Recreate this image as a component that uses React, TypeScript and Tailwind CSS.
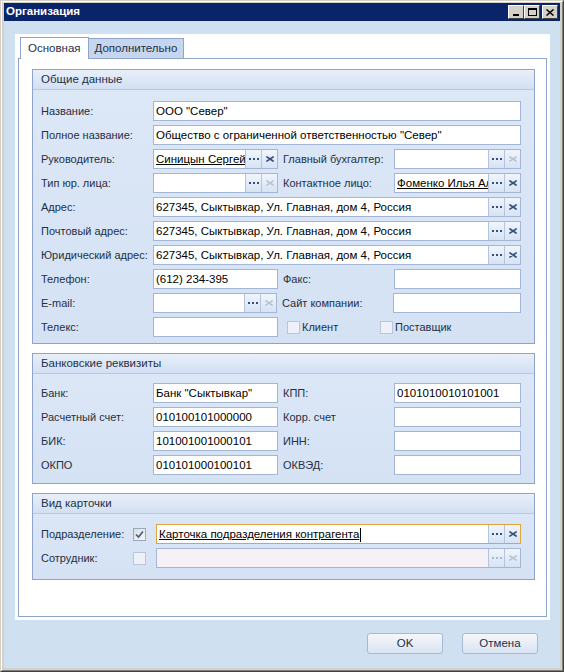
import clsx from 'clsx'

const LABEL = 'text-[11px] text-[#1f3047] whitespace-nowrap'

function Dots({ dim }: { dim?: boolean }) {
  return (
    <div className="w-[16px] h-full shrink-0 border-l border-[#b3c4df] bg-gradient-to-b from-[#f0f5fc] to-[#d7e3f4] flex items-center justify-center gap-[2px]">
      <span className={clsx('w-[2px] h-[2px]', dim ? 'bg-[#a9b8cf]' : 'bg-[#34507a]')} />
      <span className={clsx('w-[2px] h-[2px]', dim ? 'bg-[#a9b8cf]' : 'bg-[#34507a]')} />
      <span className={clsx('w-[2px] h-[2px]', dim ? 'bg-[#a9b8cf]' : 'bg-[#34507a]')} />
    </div>
  )
}

function Clear({ dim }: { dim?: boolean }) {
  return (
    <div className="w-[16px] h-full shrink-0 border-l border-[#b3c4df] bg-gradient-to-b from-[#f0f5fc] to-[#d7e3f4] flex items-center justify-center">
      <svg width="8" height="6" viewBox="0 0 8 6">
        <path d="M1 1 L7 5 M7 1 L1 5" stroke={dim ? '#b8c4d6' : '#34507a'} strokeWidth="1.6" strokeLinecap="square" />
      </svg>
    </div>
  )
}

type FieldProps = {
  w: string
  value?: string
  link?: boolean
  btn?: boolean
  dimX?: boolean
  focus?: boolean
  disabled?: boolean
}

function Field({ w, value, link, btn, dimX, focus, disabled }: FieldProps) {
  return (
    <div
      className={clsx(
        'flex h-[20px] shrink-0 border',
        w,
        focus ? 'border-[#dfa53a]' : 'border-[#a3b6d6]',
        disabled ? 'bg-[#f6f1f6]' : 'bg-white'
      )}
    >
      <div className="flex-1 min-w-0 overflow-hidden whitespace-nowrap pl-[2px] text-[11.5px] leading-[18px] text-black">
        {link ? <span className="underline">{value}</span> : value}
        {focus && <span className="inline-block w-px h-[14px] bg-black align-middle ml-px" />}
      </div>
      {btn && (
        <>
          <Dots dim={disabled} />
          <Clear dim={dimX || disabled} />
        </>
      )}
    </div>
  )
}

function Check({ checked, dim }: { checked?: boolean; dim?: boolean }) {
  return (
    <div
      className={clsx(
        'w-[13px] h-[13px] shrink-0 border flex items-center justify-center',
        dim ? 'border-[#b9c6da] bg-[#eef2f8]' : 'border-[#9aaac4] bg-gradient-to-br from-[#dcdcdc] to-[#f8f8f8]'
      )}
    >
      {checked && (
        <svg width="9" height="9" viewBox="0 0 9 9">
          <path d="M1 4.5 L3.5 7 L8 1.5" stroke="#3c5a8a" strokeWidth="1.6" fill="none" />
        </svg>
      )}
    </div>
  )
}

function Row({ children }: { children: React.ReactNode }) {
  return <div className="flex items-center h-[20px]">{children}</div>
}

function Group({ title, children, pt, pb }: { title: string; children: React.ReactNode; pt: string; pb: string }) {
  return (
    <div className="border border-[#8ea4cb] bg-gradient-to-b from-[#dde8f7] to-[#d4e2f4]">
      <div className="h-[20px] pl-[8px] flex items-center border-b border-[#b5c8e6] bg-gradient-to-b from-[#e8eff9] to-[#d2e0f4] text-[11.5px] text-[#1f3047]">
        {title}
      </div>
      <div className={clsx('flex flex-col gap-[4px] pl-[8px] pr-[11px]', pt, pb)}>{children}</div>
    </div>
  )
}

function TitleBtn({ children }: { children: React.ReactNode }) {
  return (
    <div className="w-[16px] h-[14px] bg-[#d4d0c8] border border-t-white border-l-white border-r-[#404040] border-b-[#404040] flex items-center justify-center">
      {children}
    </div>
  )
}

export default function App() {
  return (
    <div className="w-[564px] h-[672px] font-['Liberation_Sans',Arial,sans-serif] border border-t-[#d4d0c8] border-l-[#d4d0c8] border-r-[#404040] border-b-[#404040]">
      <div className="h-full border border-t-white border-l-white border-r-[#808080] border-b-[#808080] bg-[#d4d0c8] p-[2px] pt-[1px] flex flex-col">
        {/* title bar */}
        <div className="h-[18px] shrink-0 bg-[#0a246a] flex items-center pl-[2px] pr-[2px]">
          <span className="text-white font-bold text-[11.5px] flex-1">Организация</span>
          <div className="flex">
            <TitleBtn>
              <span className="w-[6px] h-[2px] bg-black mt-[6px] -ml-[1px]" />
            </TitleBtn>
            <TitleBtn>
              <span className="w-[9px] h-[8px] border border-black border-t-2" />
            </TitleBtn>
          </div>
          <div className="ml-[2px]">
            <TitleBtn>
              <svg width="8" height="7" viewBox="0 0 8 7">
                <path d="M0.5 0.5 L7.5 6.5 M7.5 0.5 L0.5 6.5" stroke="#000" strokeWidth="1.5" />
              </svg>
            </TitleBtn>
          </div>
        </div>

        {/* body */}
        <div className="flex-1 bg-[#cfe0f0] pt-[13px] pl-[11px] pr-[10px] pb-[12px] flex flex-col">
          <div className="bg-white p-[3px] h-[586px] flex flex-col">
            {/* tabs */}
            <div className="flex items-end h-[21px] pl-[2px] relative z-10">
              <div className="h-[22px] -mb-px px-[7px] bg-white border border-b-0 border-[#8ea4cb] flex items-center text-[11.5px] text-[#1f3047]">
                Основная
              </div>
              <div className="h-[20px] px-[6px] bg-[#c5d6ee] border border-l-0 border-b-0 border-[#8ea4cb] flex items-center text-[11.5px] text-[#1f3047]">
                Дополнительно
              </div>
            </div>
            <div className="flex-1 border border-[#8ea4cb] pt-[10px] pl-[13px] pr-[11px] flex flex-col gap-[9px]">
              <Group title="Общие данные" pt="pt-[11px]" pb="pb-[6px]">
                <Row>
                  <span className={clsx(LABEL, 'w-[112px]')}>Название:</span>
                  <Field w="w-[368px]" value={'ООО "Север"'} />
                </Row>
                <Row>
                  <span className={clsx(LABEL, 'w-[112px]')}>Полное название:</span>
                  <Field w="w-[368px]" value={'Общество с ограниченной ответственностью "Север"'} />
                </Row>
                <Row>
                  <span className={clsx(LABEL, 'w-[112px]')}>Руководитель:</span>
                  <Field w="w-[125px]" value="Синицын Сергей Иванович" link btn />
                  <span className={clsx(LABEL, 'w-[111px] ml-[5px]')}>Главный бухгалтер:</span>
                  <Field w="w-[127px]" btn dimX />
                </Row>
                <Row>
                  <span className={clsx(LABEL, 'w-[112px]')}>Тип юр. лица:</span>
                  <Field w="w-[125px]" btn dimX />
                  <span className={clsx(LABEL, 'w-[111px] ml-[5px]')}>Контактное лицо:</span>
                  <Field w="w-[127px]" value="Фоменко Илья Алексеевич" link btn />
                </Row>
                <Row>
                  <span className={clsx(LABEL, 'w-[112px]')}>Адрес:</span>
                  <Field w="w-[368px]" value="627345, Сыктывкар, Ул. Главная, дом 4, Россия" btn />
                </Row>
                <Row>
                  <span className={clsx(LABEL, 'w-[112px]')}>Почтовый адрес:</span>
                  <Field w="w-[368px]" value="627345, Сыктывкар, Ул. Главная, дом 4, Россия" btn />
                </Row>
                <Row>
                  <span className={clsx(LABEL, 'w-[112px]')}>Юридический адрес:</span>
                  <Field w="w-[368px]" value="627345, Сыктывкар, Ул. Главная, дом 4, Россия" btn />
                </Row>
                <Row>
                  <span className={clsx(LABEL, 'w-[112px]')}>Телефон:</span>
                  <Field w="w-[125px]" value="(612) 234-395" />
                  <span className={clsx(LABEL, 'w-[111px] ml-[5px]')}>Факс:</span>
                  <Field w="w-[127px]" />
                </Row>
                <Row>
                  <span className={clsx(LABEL, 'w-[112px]')}>E-mail:</span>
                  <Field w="w-[124px]" btn dimX />
                  <span className={clsx(LABEL, 'w-[111px] ml-[5px]')}>Сайт компании:</span>
                  <Field w="w-[128px]" />
                </Row>
                <Row>
                  <span className={clsx(LABEL, 'w-[112px]')}>Телекс:</span>
                  <Field w="w-[125px]" />
                  <div className="ml-[9px] flex items-center gap-[2px] w-[93px]">
                    <Check dim />
                    <span className={LABEL}>Клиент</span>
                  </div>
                  <div className="flex items-center gap-[2px]">
                    <Check dim />
                    <span className={LABEL}>Поставщик</span>
                  </div>
                </Row>
              </Group>

              <Group title="Банковские реквизиты" pt="pt-[9px]" pb="pb-[8px]">
                <Row>
                  <span className={clsx(LABEL, 'w-[112px]')}>Банк:</span>
                  <Field w="w-[125px]" value={'Банк "Сыктывкар"'} />
                  <span className={clsx(LABEL, 'w-[111px] ml-[5px]')}>КПП:</span>
                  <Field w="w-[127px]" value="0101010010101001" />
                </Row>
                <Row>
                  <span className={clsx(LABEL, 'w-[112px]')}>Расчетный счет:</span>
                  <Field w="w-[125px]" value="010100101000000" />
                  <span className={clsx(LABEL, 'w-[111px] ml-[5px]')}>Корр. счет</span>
                  <Field w="w-[127px]" />
                </Row>
                <Row>
                  <span className={clsx(LABEL, 'w-[112px]')}>БИК:</span>
                  <Field w="w-[125px]" value="101001001000101" />
                  <span className={clsx(LABEL, 'w-[111px] ml-[5px]')}>ИНН:</span>
                  <Field w="w-[127px]" />
                </Row>
                <Row>
                  <span className={clsx(LABEL, 'w-[112px]')}>ОКПО</span>
                  <Field w="w-[125px]" value="010101000100101" />
                  <span className={clsx(LABEL, 'w-[111px] ml-[5px]')}>ОКВЭД:</span>
                  <Field w="w-[127px]" />
                </Row>
              </Group>

              <Group title="Вид карточки" pt="pt-[10px]" pb="pb-[11px]">
                <Row>
                  <span className={clsx(LABEL, 'w-[92px]')}>Подразделение:</span>
                  <Check checked />
                  <div className="ml-[10px]">
                    <Field w="w-[365px]" value="Карточка подразделения контрагента" link btn focus />
                  </div>
                </Row>
                <Row>
                  <span className={clsx(LABEL, 'w-[92px]')}>Сотрудник:</span>
                  <Check dim />
                  <div className="ml-[10px]">
                    <Field w="w-[365px]" btn disabled />
                  </div>
                </Row>
              </Group>
            </div>
          </div>

          {/* buttons */}
          <div className="mt-[13px] flex justify-end gap-[19px] pr-[12px]">
            <button className="w-[76px] h-[21px] rounded-[3px] border border-[#a9b9d3] bg-gradient-to-b from-[#f4f7fc] to-[#dae4f2] text-[11.5px] text-[#1f3047]">
              OK
            </button>
            <button className="w-[76px] h-[21px] rounded-[3px] border border-[#a9b9d3] bg-gradient-to-b from-[#f4f7fc] to-[#dae4f2] text-[11.5px] text-[#1f3047]">
              Отмена
            </button>
          </div>
        </div>
      </div>
    </div>
  )
}
